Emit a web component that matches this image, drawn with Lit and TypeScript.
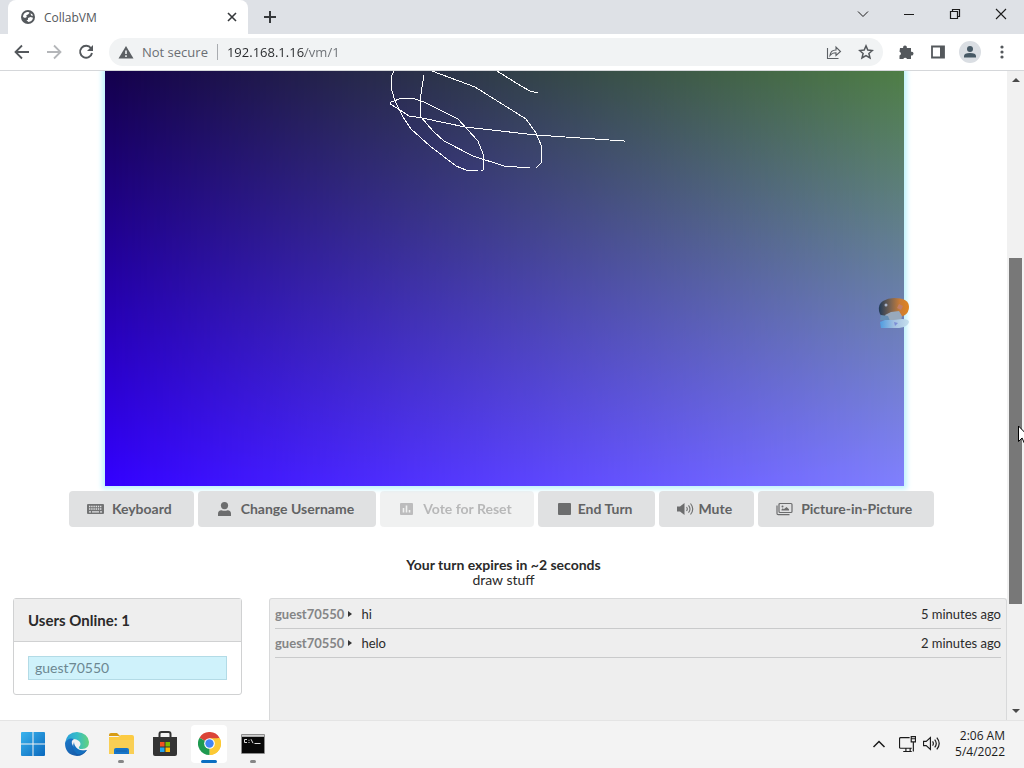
import { LitElement, html, css, nothing } from "lit";
import { customElement } from "lit/decorators.js";

const icons: Record<string, unknown> = {
  keyboard: html`<svg width="17" height="14" viewBox="0 0 17 14"><rect x="0" y="2" width="17" height="10" rx="1" fill="#727374"/><path d="M2 4.500h13M2 7h13" stroke="#e0e1e2" stroke-dasharray="1.400 .800" stroke-width="1.300"/><path d="M2 9.800h2M5 9.800h7M13 9.800h2" stroke="#e0e1e2" stroke-width="1.300"/></svg>`,
  user: html`<svg width="17" height="14" viewBox="0 0 17 14" fill="#6c6d6e"><circle cx="8.500" cy="3.600" r="3.600"/><path d="M2 14v-2.200Q2 8.300 5.500 8.300q3 1 6 0Q15 8.300 15 11.800V14z"/></svg>`,
  chart: html`<svg width="17" height="14" viewBox="0 0 17 14"><rect x="2" y="1" width="13" height="12" rx="1" fill="#6c6d6e"/><path d="M5.500 10.500V6M8.500 10.500V3.500M11.500 10.500V8" stroke="#e0e1e2" stroke-width="1.600"/></svg>`,
  square: html`<svg width="17" height="14" viewBox="0 0 17 14"><rect x="2" y="1" width="13" height="12" rx="1" fill="#6c6d6e"/></svg>`,
  volume: html`<svg width="17" height="14" viewBox="0 0 17 14"><path d="M0 4.500h3L7.500 1v12L3 9.500H0z" fill="#6c6d6e"/><path d="M9.500 5q1.600 2 0 4M11.500 3.300q3 3.700 0 7.400M13.500 1.500q4.500 5.500 0 11" fill="none" stroke="#6c6d6e" stroke-width="1.100"/></svg>`,
  images: html`<svg width="17" height="14" viewBox="0 0 17 14"><rect x="3" y="1.500" width="13" height="9" rx="1" fill="none" stroke="#6c6d6e" stroke-width="1.200"/><path d="M1 3.500v8q0 1.200 1.200 1.200H13.500" fill="none" stroke="#6c6d6e" stroke-width="1.200"/><circle cx="6.500" cy="4.500" r="1" fill="#6c6d6e"/><path d="M5.500 8.500V7.500L6.800 6.300l1 1L10.500 5 13 7.300v1.200z" fill="#6c6d6e"/></svg>`,
};

const stroke = (d: string, w = 1, c = "#1b1b1b", size = 16) =>
  html`<svg width=${size} height=${size} viewBox="0 0 16 16" fill="none" stroke=${c} stroke-width=${w}><path d=${d} /></svg>`;

@customElement("browser-chrome")
class BrowserChrome extends LitElement {
  static styles = css`
    :host { display: block; font-family: "Open Sans", "Noto Sans", sans-serif; }
    button { border: 0; background: none; padding: 0; display: grid; place-items: center; }
    svg { display: block; }
    .strip { display: flex; height: 34px; background: #dee1e6; padding-left: 8px; }
    .tab { width: 240px; box-sizing: border-box; background: #fff; border-radius: 8px 8px 0 0; display: flex; align-items: center; padding: 0 8px 0 13px; color: #54585c; font-size: 12px; }
    .tab span { flex: 1; padding-left: 9px; }
    .tab button { width: 16px; height: 16px; }
    .plus { width: 44px; }
    .win { margin-left: auto; display: flex; height: 28px; }
    .win button { width: 46px; }
    .bar { display: flex; align-items: center; height: 36px; padding: 0 6px; border-bottom: 1px solid #d5d7da; background: #fff; }
    .bar button { width: 32px; height: 32px; flex: none; }
    .omni { flex: 1; min-width: 0; margin: 0 7px; height: 28px; border-radius: 14px; background: #f1f3f4; display: flex; align-items: center; padding: 0 1px 0 9px; font-size: 13px; color: #6a6e73; }
    .omni label { padding: 0 9px 0 8px; white-space: nowrap; }
    .sep { width: 1px; height: 16px; background: #a9acb0; margin-right: 9px; }
    input { flex: 1; min-width: 0; border: 0; padding: 0; outline: 0; font: inherit; color: transparent; background: linear-gradient(90deg, #26282b 78px, #6a6e73 78px); -webkit-background-clip: text; background-clip: text; }
  `;
  render() {
    return html`
      <div class="strip">
        <div class="tab">
          <svg width="14" height="14" viewBox="0 0 14 14"><circle cx="7" cy="7" r="7" fill="#55595d"/><path d="M2 7Q2 3 6 2q2.500-.300 2.500 1L7 4.500 5.300 5.200 5.800 7 4 8zM7 8l2.500-1 2.500.800Q11.300 11.600 7.500 12L5.500 10.300 7 9.800zM9.500 3.300l1.800 1 .800 1.500-2-.300z" fill="#fff"/></svg>
          <span>CollabVM</span>
          <button aria-label="Close tab">${stroke("M4 4l8 8M12 4l-8 8", 1.6, "#35383b")}</button>
        </div>
        <button class="plus" aria-label="New tab">${stroke("M8 2v12M2 8h12", 2, "#35383b")}</button>
        <div class="win">
          <button aria-label="Search tabs">${stroke("M3 5.500l5 5 5-5", 1)}</button>
          <button aria-label="Minimize">${stroke("M3 8.500h10", 1)}</button>
          <button aria-label="Restore">${stroke("M3.500 5.500h7v7h-7zM5.500 5.500v-2h7v7h-2", 1.2)}</button>
          <button aria-label="Close">${stroke("M3 3l10 10M13 3L3 13", 1.1)}</button>
        </div>
      </div>
      <div class="bar">
        <button aria-label="Back">${stroke("M15 8H2M8 1.500L1.500 8 8 14.500", 1.8, "#54585c")}</button>
        <button aria-label="Forward">${stroke("M1 8h13M8 1.500L14.500 8 8 14.500", 1.8, "#b4b6b9")}</button>
        <button aria-label="Reload"><svg width="16" height="16" viewBox="0 0 16 16"><path d="M13 4.200A6 6 0 1 0 14 9" fill="none" stroke="#54585c" stroke-width="1.900"/><path d="M15 1v6H9z" fill="#54585c"/></svg></button>
        <div class="omni">
          <svg width="16" height="14" viewBox="0 0 16 14"><path d="M8 1l7.500 12.500H.5z" fill="#5c6064"/><path d="M8 5.500v3.500M8 10.300v1.700" stroke="#f1f3f4" stroke-width="1.600"/></svg>
          <label for="url">Not secure</label>
          <span class="sep"></span>
          <input id="url" value="192.168.1.16/vm/1" />
          <button aria-label="Share">${stroke("M1.500 4v10.500h11M4 11.500q.500-5.500 6-5.500V3l4.500 4.500L10 11.500V8.800Q6 8.800 4 11.500z", 1.1, "#5c6064")}</button>
          <button aria-label="Bookmark">${stroke("M8 1.900l1.800 4.200 4.600.400-3.500 3 1.100 4.500L8 11.600l-4 2.400 1.100-4.500-3.500-3 4.600-.400z", 1.5, "#54585c")}</button>
        </div>
        <button aria-label="Extensions"><svg width="16" height="16" viewBox="0 0 16 16"><path d="M2 4h3.200a1.900 1.900 0 1 1 3.600 0H13v3.800a1.900 1.900 0 1 1 0 3.600V15H9a1.900 1.900 0 0 0-3.600 0H1.500v-3.600a1.900 1.900 0 0 0 0-3.700z" fill="#54585c"/></svg></button>
        <button aria-label="Side panel"><svg width="16" height="16" viewBox="0 0 16 16"><path d="M2 2.500h12v11H2z" fill="none" stroke="#54585c" stroke-width="1.800"/><path d="M10 2h4v12h-4z" fill="#54585c"/></svg></button>
        <button aria-label="Profile"><svg width="22" height="22" viewBox="0 0 22 22"><circle cx="11" cy="11" r="11" fill="#dadee3"/><circle cx="11" cy="8" r="3" fill="#475965"/><path d="M5 16.500v-1.500q0-3 6-3t6 3v1.500z" fill="#475965"/></svg></button>
        <button aria-label="Menu"><svg width="16" height="16" viewBox="0 0 16 16" fill="#54585c"><circle cx="8" cy="3" r="1.600"/><circle cx="8" cy="8" r="1.600"/><circle cx="8" cy="13" r="1.600"/></svg></button>
      </div>`;
  }
}

@customElement("vm-display")
class VmDisplay extends LitElement {
  static styles = css`
    :host { display: block; position: relative; width: 80%; max-width: 799px; height: 415px; background: linear-gradient(#14004c, #3300ff); box-shadow: 0 0 5px 3px #bff3fd; }
    .right { height: 100%; background: linear-gradient(#4f7e46, #8080ff); -webkit-mask-image: linear-gradient(90deg, transparent, #000); mask-image: linear-gradient(90deg, transparent, #000); }
    .ink { position: absolute; inset: 0; width: 100%; height: 100%; }
    .ball { position: absolute; right: -6px; top: 226px; }
  `;
  render() {
    return html`<div class="right"></div>
      <svg class="ink" viewBox="0 0 799 415" preserveAspectRatio="none" fill="none" stroke="#fff" stroke-width="1" shape-rendering="crispEdges">
        <path d="M289 0L286 6V16L290 30 298 46 306 58 325 75 351 95 361 99 373 100M376 100L378 99V83L373 70 353 48 319 31 307 27H297L286 31 285 33 292 37 304 45 317 47 360 56 431 64 519 70V71"/>
        <path d="M319 4L315 29 316 46 322 53 328 60 339 70 368 85 399 95 425 97M431 97L436 92V74L431 62 421 48 370 16 327 0M392 0L416 15 425 20 433 22"/>
      </svg>
      <svg class="ball" width="32" height="32" viewBox="0 0 32 32">
        <defs>
          <linearGradient id="a"><stop offset="0" stop-color="#1f3a58"/><stop offset=".4" stop-color="#7d6450"/><stop offset=".7" stop-color="#c97c36"/><stop offset="1" stop-color="#e0851e"/></linearGradient>
          <linearGradient id="b"><stop offset="0" stop-color="#4f9ce0"/><stop offset=".5" stop-color="#a5c2e2"/><stop offset="1" stop-color="#c5e0ee"/></linearGradient>
        </defs>
        <path d="M1 14Q0 7 5 4 10 1 16 1q15 0 15 9 0 5-4 8l-6 3H9Q2 20 1 14z" fill="url(#a)"/>
        <path d="M7 18l6-3 8-1 3 5-1 6H10z" fill="#98a9bc"/>
        <path d="M3 18l7 1 2 5-10-1z" fill="#668fb5"/>
        <path d="M2 25l5-2h9l8-1q7 0 7 3-1 5-10 6H3z" fill="url(#b)"/>
        <circle cx="8" cy="8" r="1.500" fill="#a9b4cb"/><path d="M21 7l4 2-2 4-4-2z" fill="#c07f6a"/><path d="M16 25l4 1-3 3z" fill="#7c8ed6"/>
      </svg>`;
  }
}

@customElement("vm-page")
class VmPage extends LitElement {
  static styles = css`
    :host { display: flex; flex-direction: column; min-height: 0; overflow: hidden; font-family: Lato, sans-serif; font-size: 14px; color: #2a2a2a; background: #fff; }
    vm-display { align-self: center; flex: none; margin-left: 2px; }
    .actions { display: flex; flex-wrap: wrap; justify-content: center; gap: 4px; margin: 5px 4px 0 0; position: relative; }
    .actions button { display: flex; align-items: center; height: 36px; padding: 0 22px 0 18px; gap: 8px; border: 0; border-radius: 4px; background: #e0e1e2; color: #626364; font: 700 14px/16px Lato, sans-serif; white-space: nowrap; }
    .actions button.tight { gap: 5px; }
    .actions button:disabled { opacity: .45; }
    .status { margin: 30px 0 11px; text-align: center; line-height: 15px; }
    .cols { flex: 1; min-height: 0; display: grid; grid-template-columns: 229fr 738fr; gap: 27px; padding-left: 13px; align-items: start; }
    .users { border: 1px solid #d0d1d2; border-radius: 3px; }
    h2 { margin: 0; background: #eee; border-bottom: 1px solid #d0d1d2; padding: 0 14px; font-size: 15px; line-height: 42px; }
    ul { list-style: none; margin: 14px; padding: 0; }
    .users li { background: #cff2fb; border: 1px solid #b3dbe6; color: #6c8791; line-height: 22px; padding: 0 6px; }
    .chat { align-self: stretch; min-height: 140px; background: #eee; border: 1px solid #d8d9da; border-bottom: 0; border-radius: 3px 3px 0 0; padding: 1px 5px; font-size: 13px; }
    .chat ul { margin: 0; }
    .chat li { display: flex; align-items: center; line-height: 28px; border-bottom: 1px solid #c9cacb; }
    .chat b { color: #848586; }
    .chat i { border: 3px solid transparent; border-left: 4px solid #333; border-right: 0; margin: 0 9px 0 4px; }
    time { margin-left: auto; }
    svg { display: block; }
  `;
  private actions = [
    { icon: "keyboard", label: "Keyboard" },
    { icon: "user", label: "Change Username" },
    { icon: "chart", label: "Vote for Reset", disabled: true },
    { icon: "square", label: "End Turn", tight: true },
    { icon: "volume", label: "Mute", tight: true },
    { icon: "images", label: "Picture-in-Picture" },
  ];
  private messages = [
    { user: "guest70550", text: "hi", when: "5 minutes ago" },
    { user: "guest70550", text: "helo", when: "2 minutes ago" },
  ];
  render() {
    return html`
      <vm-display></vm-display>
      <div class="actions">
        ${this.actions.map((a) => html`<button class=${a.tight ? "tight" : nothing} ?disabled=${a.disabled}>${icons[a.icon]}<span>${a.label}</span></button>`)}
      </div>
      <div class="status"><b>Your turn expires in ~2 seconds</b><br />draw stuff</div>
      <div class="cols">
        <section class="users"><h2>Users Online: 1</h2><ul><li>guest70550</li></ul></section>
        <section class="chat"><ul>
          ${this.messages.map((m) => html`<li><b>${m.user}</b><i></i><span>${m.text}</span><time>${m.when}</time></li>`)}
        </ul></section>
      </div>`;
  }
}

@customElement("task-bar")
class TaskBar extends LitElement {
  static styles = css`
    :host { display: flex; align-items: center; height: 47px; background: #f3f3f3; padding: 0 19px 2px 11px; box-sizing: border-box; font: 12px/16px "Open Sans", "Noto Sans", sans-serif; color: #1b1b1b; }
    button { border: 0; background: none; padding: 0; display: grid; place-items: center; position: relative; width: 36px; height: 38px; margin: 0 4px; border-radius: 4px; flex: none; }
    .active { background: #fff; }
    .run::after { content: ""; position: absolute; bottom: 0; width: 6px; height: 3px; border-radius: 2px; background: #868686; }
    .active::after { width: 16px; background: #0a6fc2; }
    .tray { margin-left: auto; display: flex; align-items: center; }
    .tray button { width: 24px; margin: 0; }
    .tray .up { margin-right: 4px; }
    .clock { text-align: right; margin-left: 12px; }
    svg { display: block; }
  `;
  render() {
    return html`
      <button aria-label="Start"><svg width="24" height="24" viewBox="0 0 24 24"><defs><linearGradient id="w" x2="1" y2="1"><stop stop-color="#3ab4ee"/><stop offset="1" stop-color="#0a68bd"/></linearGradient></defs><path d="M0 1q0-1 1-1h10.500v11.500H0zM12.500 0H23q1 0 1 1v10.500H12.500zM0 12.500h11.500V24H1q-1 0-1-1zM12.500 12.500H24V23q0 1-1 1H12.500z" fill="url(#w)"/></svg></button>
      <button aria-label="Edge"><svg width="24" height="24" viewBox="0 0 24 24"><defs><linearGradient id="e" x2="1"><stop stop-color="#2a9edc"/><stop offset=".5" stop-color="#35bcc8"/><stop offset="1" stop-color="#64d27c"/></linearGradient><linearGradient id="f" x2="1" y2="1"><stop stop-color="#1b78c9"/><stop offset="1" stop-color="#15539f"/></linearGradient></defs><path d="M0 11Q2 0 12 0q11 1 12 10 0 7-7 7-4 0-3-2 3-3 0-6Q8 4 0 11z" fill="url(#e)"/><path d="M0 11q3-6 9-4Q5 9 8 14q4 6 14 4-4 6-10 6Q0 23 0 11z" fill="url(#f)"/><path d="M9 10q-3 7 3 12 6 1 10-4-5 2-9-1-4-3-4-7z" fill="#1470c0"/></svg></button>
      <button class="run" aria-label="File Explorer"><svg width="25" height="24" viewBox="0 0 25 24"><path d="M0 3q0-2 2-2h6l3 3H0z" fill="#d79b13"/><path d="M0 5h9l3-2h11q2 0 2 2v17H0z" fill="#fccb43"/><path d="M0 8h25v13q0 1-1 1H1q-1 0-1-1z" fill="#f9cf55"/><path d="M5 22v-4q0-2 2-2h11q2 0 2 2v4z" fill="#1675c9"/><path d="M7 19h11" stroke="#1261a8"/></svg></button>
      <button aria-label="Microsoft Store"><svg width="24" height="26" viewBox="0 0 24 26"><path d="M6.500 8V3q0-2 2-2h7q2 0 2 2v5" fill="none" stroke="#333" stroke-width="2"/><path d="M0 6h24v17q0 2-2 2H2q-2 0-2-2z" fill="#343434"/><path d="M7 11h4.500v4.500H7z" fill="#f25022"/><path d="M12.500 11H17v4.500h-4.500z" fill="#7fba00"/><path d="M7 16.500h4.500V21H7z" fill="#22a5ee"/><path d="M12.500 16.500H17V21h-4.500z" fill="#ffb902"/></svg></button>
      <button class="run active" aria-label="Chrome"><svg width="23" height="23" viewBox="0 0 24 24"><path d="M12 12L1.600 6A12 12 0 0 1 22.400 6z" fill="#db4437"/><path d="M12 12L22.400 6A12 12 0 0 1 12 24z" fill="#fcc934"/><path d="M12 12v12A12 12 0 0 1 1.600 6z" fill="#1e9a50"/><path d="M12 6.500h10.700A12 12 0 0 1 12 24l4.800-9.200z" fill="#fcc934"/><circle cx="12" cy="12" r="5.600" fill="#fff"/><circle cx="12" cy="12" r="4.400" fill="#4285f4"/></svg></button>
      <button class="run" aria-label="Command Prompt"><svg width="24" height="20" viewBox="0 0 24 20"><rect width="24" height="20" rx="1" fill="#8c8c8c"/><path d="M1 3h22v16H1z" fill="#080808"/><path d="M1 1h22v1.500H1z" fill="#d0d0d0"/><path d="M6 5.500H3.500v3H6M8 5.800v1M8 8v1M10 5.200l2 4M13.500 9.500h6" fill="none" stroke="#ddd"/></svg></button>
      <div class="tray">
        <button class="up" aria-label="Hidden icons">${stroke("M2.500 11L8 5.500 13.500 11", 1.5)}</button>
        <button aria-label="Network">${stroke("M10 2.500H1.500q-1 0-1 1v8q0 1 1 1H12M4 15.500h8M6.500 12.500v3M10.500 12.500v3M11.500 1.500h4v5h-4zM13.500 6.500v9M11.500 3.500h4", 1.1, "#1b1b1b", 17)}</button>
        <button aria-label="Volume">${stroke("M.500 6v4h2.500l4 3.500v-11L3 6zM9 6q1.500 2 0 4M11 4.300q3 3.700 0 7.400M13 2.500q4.500 5.500 0 11", 1.1, "#1b1b1b", 17)}</button>
        <div class="clock">2:06 AM<br />5/4/2022</div>
      </div>`;
  }
}

@customElement("app-root")
class AppRoot extends LitElement {
  static styles = css`
    :host { display: flex; flex-direction: column; height: 100vh; position: relative; overflow: hidden; }
    .view { flex: 1; min-height: 0; display: flex; border-bottom: 1px solid #e4e4e4; box-sizing: border-box; }
    vm-page { flex: 1; min-width: 0; }
    .scroll { width: 17px; flex: none; background: #f1f1f1; display: flex; flex-direction: column; align-items: center; padding: 7px 0; box-sizing: border-box; }
    .up, .down { border: 4px solid transparent; border-top: 0; border-bottom: 4px solid #4a4a4a; }
    .down { border-top: 4px solid #4a4a4a; border-bottom: 0; }
    .rail { flex: 1; align-self: stretch; display: flex; flex-direction: column; padding: 0 2px; }
    .before { flex: 176; }
    .thumb { flex: 346; background: #787878; }
    .after { flex: 105; }
    .cursor { position: absolute; right: -6px; top: 425px; }
  `;
  render() {
    return html`
      <browser-chrome></browser-chrome>
      <div class="view">
        <vm-page></vm-page>
        <div class="scroll"><div class="up"></div><div class="rail"><div class="before"></div><div class="thumb"></div><div class="after"></div></div><div class="down"></div></div>
      </div>
      <task-bar></task-bar>
      <svg class="cursor" width="12" height="19" viewBox="0 0 12 19"><path d="M.5 1v15.500l3.600-3.500 2.400 5.500 2.200-1-2.300-5.300h5z" fill="#fff" stroke="#000"/></svg>`;
  }
}
